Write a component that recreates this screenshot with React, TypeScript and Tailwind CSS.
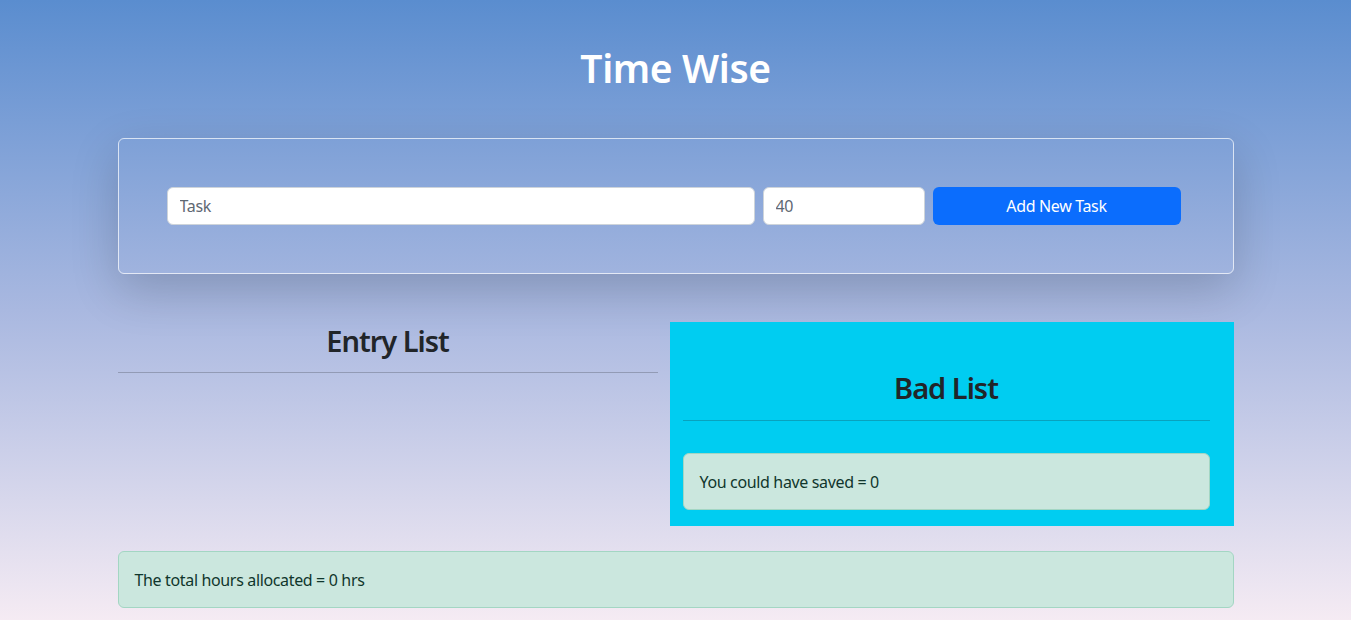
import React from "react";

export default function App() {
  return (
    <div
      className="min-h-screen w-full bg-gradient-to-b from-[#5a8dcf] via-[#a9b8e0] to-[#f5ebf3] text-[#212529]"
      style={{ fontFamily: '"Noto Sans", "Open Sans", sans-serif' }}
    >
      <div className="mx-auto w-[1116px] pt-[44px] pb-[12px]">
        <h1 className="text-center text-[39px] leading-[48px] font-semibold tracking-[-0.4px] text-white">Time Wise</h1>

        <div className="mt-[46px] rounded-[6px] border border-white/70 p-[48px] shadow-[0_1rem_3rem_rgba(0,0,0,0.175)]">
          <div className="flex gap-[8px]">
            <input
              placeholder="Task"
              className="h-[38px] w-[588px] rounded-[6px] border border-[#ced4da] bg-white px-[12px] text-[16px] tracking-[-0.35px] text-[#212529] placeholder:text-[#5f6873] outline-none"
            />
            <input
              placeholder="40"
              className="h-[38px] w-[162px] rounded-[6px] border border-[#ced4da] bg-white px-[12px] text-[16px] tracking-[-0.35px] text-[#212529] placeholder:text-[#5f6873] outline-none"
            />
            <button className="h-[38px] w-[248px] rounded-[6px] bg-[#0b6dfd] text-[16px] tracking-[-0.35px] text-white">Add New Task</button>
          </div>
        </div>

        <div className="mt-[48px] flex gap-[12px] items-start">
          <div className="w-[540px]">
            <h2 className="text-center text-[29px] leading-[38px] font-semibold tracking-[-1px]">Entry List</h2>
            <hr className="mt-[12px] border-t border-[#212529]/25" />
          </div>
          <div className="w-[564px] bg-[#00cdf1] pt-[47px] pb-[16px] pl-[13px] pr-[24px]">
            <h2 className="text-center text-[29px] leading-[38px] font-semibold tracking-[-1px]">Bad List</h2>
            <hr className="mt-[13px] border-t border-[#212529]/25" />
            <div className="mt-[32px] h-[57px] flex items-center rounded-[6px] border border-[#a3d6c3] bg-[#cbe7de] px-[16px] text-[16px] tracking-[-0.35px] text-[#10362c]">
              You could have saved = 0
            </div>
          </div>
        </div>

        <div className="mt-[25px] h-[57px] flex items-center rounded-[6px] border border-[#a3d6c3] bg-[#cbe7de] px-[16px] text-[16px] tracking-[-0.35px] text-[#10362c]">
          The total hours allocated = 0 hrs
        </div>
      </div>
    </div>
  );
}
